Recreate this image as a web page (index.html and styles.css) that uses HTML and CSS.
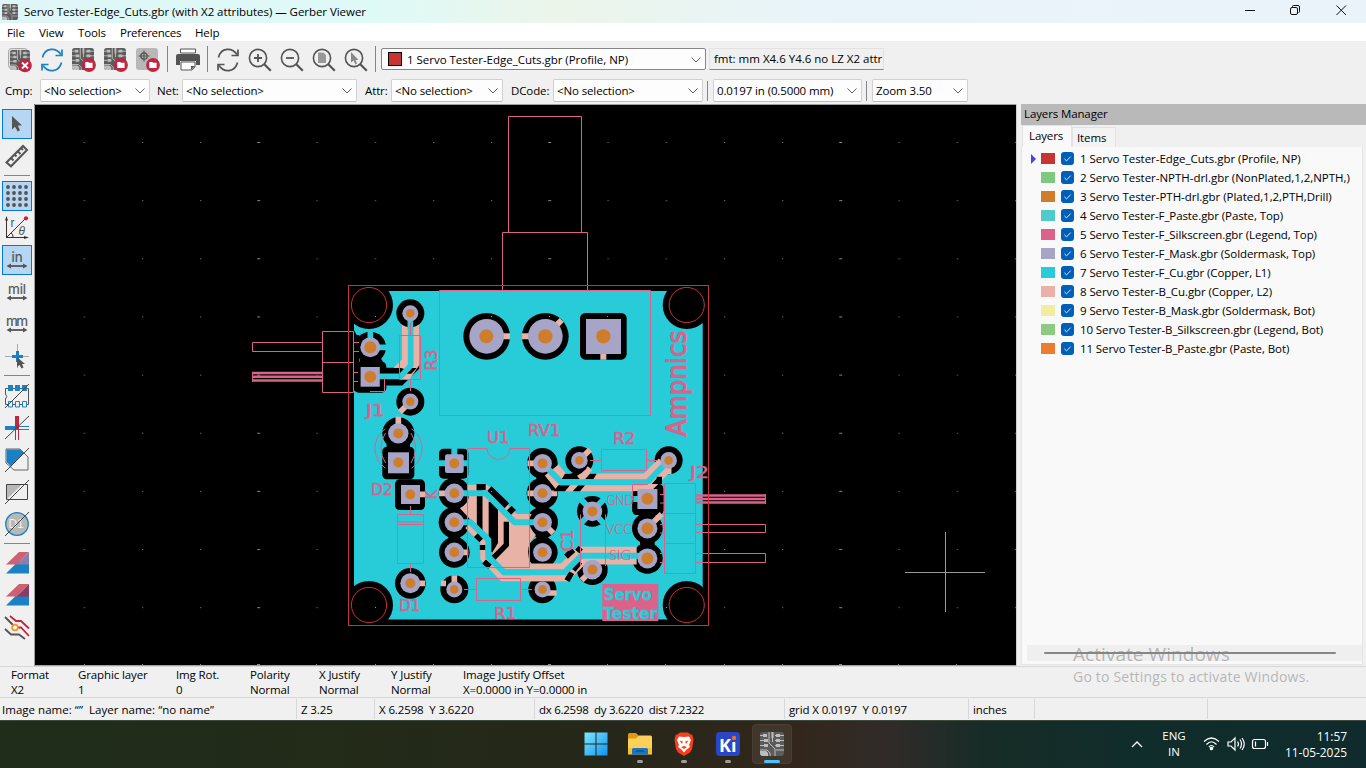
FILE: index.html
```html
<!DOCTYPE html>
<html lang="en">
<head>
<meta charset="utf-8">
<title>Gerber Viewer</title>
<link rel="stylesheet" href="styles.css">
</head>
<body>
<svg class="defs" width="0" height="0">
  <symbol id="pcb" viewBox="0 0 24 24">
    <rect width="24" height="24" rx="3" fill="#5c5c5c"/>
    <g fill="none" stroke="#bdbdbd" stroke-width="1"><path d="M0 3.5H6M0 8.5H7M0 13.5H7M15 3.5H24M15 8.5H24M15 13.5H24M9 0V11L15 17V24M12.5 0V10M0 18H7L10 21V24M16 18H24"/></g>
    <g fill="#bdbdbd"><path d="M3 2H7V5H3zM4 7H8V10H4zM4 12H8V15H4zM16 2H20V5H16zM16 7H20V10H16zM16 12H20V15H16zM0 19H6L8 21V24H3Q0 24 0 21zM11.5 0H13.5V6H11.5z"/></g>
  </symbol>
  <symbol id="badge" viewBox="0 0 14 14"><circle cx="7" cy="7" r="6.9" fill="#bf2641"/><path d="M3.3 4H6.2L7 4.800H10.600V10H3.300z" fill="#fff"/></symbol>
  <symbol id="tick" viewBox="0 0 13 13"><rect width="13" height="13" rx="3" fill="#005fb8"/><path d="M3.4 6.8L5.5 8.9L9.7 4.6" fill="none" stroke="#d9e8f6"/></symbol>
  <symbol id="arr" viewBox="0 0 24 24"><path d="M4 18H20" stroke="#545454" stroke-width="1.8"/><path d="M1.5 18L6 15.5V20.5zM22.5 18L18 15.5V20.5z" fill="#545454"/></symbol>
  <symbol id="lens" viewBox="0 0 24 24"><circle cx="10" cy="10" r="8.600" fill="none" stroke="#545454" stroke-width="1.6"/><path d="M16 16L22.8 22.8" stroke="#545454" stroke-width="2.2"/></symbol>
  <symbol id="sync" viewBox="0 0 24 24"><path d="M2.500 9.500C5 -.5 16 -1 21 6.500M21.500 14.500C19 24.500 8 25 3 17.500" fill="none" stroke="currentColor" stroke-width="1.7"/><path d="M22 1.500V7.500H15.500M2 22.500V16.500H8.500" fill="none" stroke="currentColor" stroke-width="1.7"/></symbol>
</svg>

<header class="title">
  <svg width="16" height="16"><use href="#pcb"/></svg>
  <span class="title-text">Servo Tester-Edge_Cuts.gbr (with X2 attributes) — Gerber Viewer</span>
  <svg class="win" width="126" height="23" viewBox="1240 0 126 23" fill="none" stroke="#111"><path d="M1245 10.500H1255M1336.500 5.500L1346 15M1346 5.500L1336.500 15"/><rect x="1290.500" y="7.500" width="7" height="7" rx="1.500"/><path d="M1292.500 7V6.500Q1292.500 5.500 1293.500 5.500H1298Q1299.500 5.500 1299.500 7V11.500Q1299.500 12.500 1298.500 12.500"/></svg>
</header>
<nav class="menu"><span>File</span><span>View</span><span>Tools</span><span>Preferences</span><span>Help</span></nav>

<div class="bar bar-a">
  <svg class="ic" viewBox="0 0 24 24"><rect x=".5" y=".5" width="19" height="20" rx="3" fill="#ddd" stroke="#aaa"/><svg x="2" y="2" width="20" height="20"><use href="#pcb"/></svg><circle cx="17" cy="17.500" r="6.800" fill="#bf2641"/><path d="M14 14.500L20 20.500M20 14.500L14 20.500" stroke="#fff" stroke-width="1.800"/></svg>
  <svg class="ic blue" viewBox="0 0 24 24"><use href="#sync"/></svg>
  <svg class="ic" viewBox="0 0 24 24"><svg width="22" height="22"><use href="#pcb"/></svg><svg x="10" y="10" width="14" height="14"><use href="#badge"/></svg></svg>
  <svg class="ic" viewBox="0 0 24 24"><svg width="22" height="22"><use href="#pcb"/></svg><svg x="10" y="10" width="14" height="14"><use href="#badge"/></svg></svg>
  <svg class="ic" viewBox="0 0 24 24"><rect width="22" height="22" rx="3" fill="#b8b8b8"/><circle cx="8" cy="8" r="3.200" fill="none" stroke="#545454" stroke-width="1.300"/><path d="M8 2.500V13.500M2.500 8H13.500" stroke="#545454" stroke-width="1.200"/><svg x="10" y="10" width="14" height="14"><use href="#badge"/></svg></svg>
  <i class="sep"></i>
  <svg class="ic" viewBox="0 0 24 24"><path d="M4.500 1H19.500V5H4.500z" fill="#fff" stroke="#545454"/><path d="M0 8Q0 6 2 6H22Q24 6 24 8V17H20V13H4V17H0z" fill="#545454"/><path d="M5 14H19V19L16 22H5z" fill="#fff" stroke="#545454"/><path d="M19 18L15 22V18z" fill="#545454"/></svg>
  <i class="sep"></i>
  <svg class="ic" viewBox="0 0 24 24"><use href="#sync"/></svg>
  <svg class="ic" viewBox="0 0 24 24"><use href="#lens"/><path d="M6 10H14M10 6V14" stroke="#545454" stroke-width="1.800"/></svg>
  <svg class="ic" viewBox="0 0 24 24"><use href="#lens"/><path d="M6 10H14" stroke="#545454" stroke-width="1.800"/></svg>
  <svg class="ic" viewBox="0 0 24 24"><use href="#lens"/><path d="M6 4.500H11.500L14 7V15H6z" fill="#999"/></svg>
  <svg class="ic" viewBox="0 0 24 24"><use href="#lens"/><path d="M7 4V14.500L9.500 12.500L11.500 16.500L13 15.500L11.500 12H14.500z" fill="#888"/></svg>
  <i class="sep"></i>
  <div class="combo big"><i class="red"></i><span>1 Servo Tester-Edge_Cuts.gbr (Profile, NP)</span><svg class="cv" width="10" height="6"><path d="M.5 .5L5 5L9.500 .5"/></svg></div>
  <div class="fmt"><span>fmt: mm X4.6 Y4.6 no LZ X2 attr</span></div>
</div>

<div class="bar bar-b">
  <label class="l1">Cmp:</label><div class="combo c1"><span>&lt;No selection&gt;</span><svg class="cv" width="10" height="6"><path d="M.5 .5L5 5L9.500 .5"/></svg></div>
  <label class="l2">Net:</label><div class="combo c2"><span>&lt;No selection&gt;</span><svg class="cv" width="10" height="6"><path d="M.5 .5L5 5L9.500 .5"/></svg></div>
  <label class="l3">Attr:</label><div class="combo c3"><span>&lt;No selection&gt;</span><svg class="cv" width="10" height="6"><path d="M.5 .5L5 5L9.500 .5"/></svg></div>
  <label class="l4">DCode:</label><div class="combo c4"><span>&lt;No selection&gt;</span><svg class="cv" width="10" height="6"><path d="M.5 .5L5 5L9.500 .5"/></svg></div>
  <i class="sep"></i><div class="combo c5"><span>0.0197 in (0.5000 mm)</span><svg class="cv" width="10" height="6"><path d="M.5 .5L5 5L9.500 .5"/></svg></div>
  <i class="sep"></i><div class="combo c6"><span>Zoom 3.50</span><svg class="cv" width="10" height="6"><path d="M.5 .5L5 5L9.500 .5"/></svg></div>
</div>

<main class="main">
  <aside class="tools">
    <b class="on"><svg class="ic" viewBox="0 0 24 24"><path d="M7 4V17.500L10 14.700L12.700 19.500L15 18.300L12.800 13.500H17z" fill="#545454"/></svg></b>
    <b><svg class="ic" viewBox="0 0 24 24"><path d="M1.500 18.500L18 2L22 6L6 22.300z M6 14L8.500 16.500M9.500 10.500L11.500 12.500M13 7.500L15.500 10M16.500 4.500L18 6" fill="none" stroke="#545454" stroke-width="2"/></svg></b>
    <hr>
    <b class="on"><svg class="ic" viewBox="0 0 24 24"><path d="M3 3H22M3 9H22M3 15H22M3 21H22" stroke="#545454" stroke-width="3.800" stroke-linecap="round" stroke-dasharray="0 6"/></svg></b>
    <b><svg class="ic" viewBox="0 0 24 24"><path d="M1.500 22V3M1 21.500H21M2 21L20 3M6 17Q8.500 18.500 8 21.500" stroke="#333" fill="none"/><path d="M0 4.500L1.500 0L3 4.500zM19 20L24 21.500L19 23z" fill="#333"/><circle cx="21" cy="2.300" r="2.100" fill="#bf2641"/><text x="5.500" y="10.500" class="gi">r</text><text x="13.500" y="19" class="gi it">θ</text></svg></b>
    <b class="on"><svg class="ic" viewBox="0 0 24 24"><use href="#arr"/><text x="12" y="14" class="un">in</text></svg></b>
    <b><svg class="ic" viewBox="0 0 24 24"><use href="#arr"/><text x="12" y="14" class="un">mil</text></svg></b>
    <b><svg class="ic" viewBox="0 0 24 24"><use href="#arr"/><text x="12" y="14" class="un" textLength="22">mm</text></svg></b>
    <b><svg class="ic" viewBox="0 0 24 24"><path d="M12.500 0V24M0 12.500H24" stroke="#aaa"/><path d="M12.500 7V18M7 12.500H18" stroke="#1a81c4" stroke-width="3"/><path d="M12 13V23L14.500 21L16.500 24.500L18.500 23.500L17 20H20z" fill="#545454"/></svg></b>
    <hr>
    <b><svg class="ic" viewBox="0 0 24 24"><path d="M.5 4.500H23.500V20.500H.5V15Q3 12.500 .5 10z" fill="none" stroke="#545454"/><path d="M3 1H8V7H3zM10 1H15V7H10zM17 1H22V7H17z" fill="#1a81c4"/><path d="M3.500 17.500H7.500V23H3.500zM10.500 17.500H14.500V23H10.500zM17.500 17.500H21.500V23H17.500z" fill="#f0f0f0" stroke="#1a81c4"/><path d="M0 24L24 0" stroke="#444"/></svg></b>
    <b><svg class="ic" viewBox="0 0 24 24"><path d="M0 12H12" stroke="#1a81c4" stroke-width="4"/><path d="M12 10.500H24M12 13.500H24" stroke="#1a81c4"/><path d="M12 0V13" stroke="#bf2641" stroke-width="4"/><path d="M10.500 13V24M13.500 13V24" stroke="#bf2641"/><path d="M0 23L24 0" stroke="#444"/></svg></b>
    <b><svg class="ic" viewBox="0 0 24 24"><path d="M1 1H15L23 9V22H9L1 15z" fill="#f0f0f0" stroke="#666"/><path d="M1.500 1.500H15L19 5L6 18.500L1.500 14z" fill="#1a81c4"/><path d="M0 24L24 0" stroke="#444"/></svg></b>
    <b><svg class="ic" viewBox="0 0 24 24"><path d="M1.500 19.500V4.500H17z" fill="#b8b8b8"/><path d="M1.500 4.500H22.500V19.500H1.500zM0 24L24 0" fill="none" stroke="#444"/></svg></b>
    <b><svg class="ic" viewBox="0 0 24 24"><circle cx="12" cy="12" r="11.300" fill="#b8b8b8" stroke="#1a81c4" stroke-width="1.300"/><text x="3.500" y="16" class="d1">D1</text><path d="M0 24L24 0" stroke="#444"/></svg></b>
    <hr>
    <b><svg class="ic" viewBox="0 0 24 24"><path d="M1 21.500L13 9.500H24V21.500z" fill="#1a81c4"/><path d="M1 12.500L14 0H24L12 12.500z" fill="#cf6074"/><path d="M24 0V12.500H12z" fill="#8881ae"/></svg></b>
    <b><svg class="ic" viewBox="0 0 24 24"><path d="M1 21.500L13 9.500H24V21.500z" fill="#1a81c4"/><path d="M1 12.500L14 0H24L12 12.500z" fill="#cf6074"/><path d="M24 0V12.500H12z" fill="#8a3c64"/></svg></b>
    <b><svg class="ic" viewBox="0 0 24 24" fill="none" stroke-width="1.800"><path d="M0 1L9 10M0 13L6 18.500H14L20 23" stroke="#545454"/><path d="M5 0L11 5H16L24 12.500M12 11.500H16L24 20" stroke="#bf2641"/><circle cx="10" cy="11.500" r="2.800" stroke="#f39a1e" fill="#fff"/></svg></b>
  </aside>

  <svg class="canvas" width="982" height="562" viewBox="34 104 982 562">
    <defs><pattern id="grid" x="-32.800" y="142" width="291" height="58.150" patternUnits="userSpaceOnUse"><path d="M0 .5H2M58.500 .5H59.500M116.700 .5H117.700M175 .5H176M233 .5H234M290 .5H291" stroke="#8a8a8a"/></pattern></defs>
    <rect x="34" y="104" width="982" height="562" fill="#000"/>
    <rect x="35" y="105" width="981" height="559" fill="url(#grid)"/>
    <path d="M84.500 664V666M142.500 664V666M200.500 664V666M316.500 664V666M375.500 664V666M433.500 664V666M491.500 664V666M607.500 664V666M665.500 664V666M724.500 664V666M782.500 664V666M898.500 664V666M956.500 664V666M257 664.500H260M548 664.500H551M839 664.500H842" stroke="#8a8a8a"/>
    <rect x="354" y="291" width="348.700" height="328.500" fill="#28ccd9"/>
    <g fill="#000"><circle cx="369" cy="305" r="24"/><circle cx="686.700" cy="305" r="24"/><circle cx="369" cy="605" r="24"/><circle cx="686.700" cy="605" r="24"/></g>

    <!-- J1, R3 -->
    <g transform="translate(240 270) scale(.33333)">
      <circle cx="391" cy="232" r="47"/><path d="M342 180L350 195H358V362H342z"/><rect x="342" y="275" width="97" height="93" rx="14"/><path d="M360 262H420L432 280H360z"/>
      <path d="M420 320H476L511 285V160" fill="none" stroke="#000" stroke-width="53"/>
      <path d="M484 155H538V285L510 327H478L500 300L484 294H460L484 270z" fill="#e8b2a7"/><path d="M500 294H530L514 311H494z"/>
      <path d="M400 319H482L512 287V130M391 180V232H440" fill="none" stroke="#28ccd9" stroke-width="17"/>
      <circle cx="511" cy="130" r="42"/><path d="M511 140V180" stroke="#28ccd9" stroke-width="17"/><circle cx="511" cy="395" r="42"/><circle cx="475" cy="490" r="48"/><path d="M511 395L480 426M475 490V440" stroke="#e8b2a7" stroke-width="17"/>
    </g>
    <!-- RV1 -->
    <g transform="translate(430 270) scale(.33333)">
      <circle cx="170" cy="199" r="70"/><circle cx="346" cy="199" r="70"/><rect x="450" y="129" width="140" height="140" rx="16"/>
      <path d="M170 199H240M346 199H276M346 199L395 150M520 199V269" stroke="#e8b2a7" stroke-width="18"/>
      <g fill="#a6a5c8"><circle cx="170" cy="199" r="52"/><circle cx="346" cy="199" r="52"/><rect x="468" y="147" width="105" height="105"/></g>
      <g fill="#ce7d2c"><circle cx="169" cy="199" r="21"/><circle cx="346" cy="199" r="21.500"/><circle cx="520" cy="199" r="21.500"/></g>
    </g>
    <!-- D2, D1, U1, R1 -->
    <g transform="translate(340 420) scale(.33333)">
      <rect x="127" y="80" width="96" height="98" rx="14"/><path d="M140 60H210V90H140z"/><rect x="165" y="178" width="90" height="92" rx="14"/><circle cx="211" cy="490" r="46"/>
      <rect x="297" y="86" width="88" height="90" rx="14"/>
      <g><circle cx="343" cy="220" r="47"/><circle cx="343" cy="307" r="47"/><circle cx="343" cy="397" r="46"/><circle cx="607" cy="130" r="46"/><circle cx="607" cy="220" r="47"/><circle cx="607" cy="307" r="47"/><circle cx="607" cy="397" r="46"/><circle cx="343" cy="508" r="42"/><circle cx="607" cy="508" r="42"/><path d="M325 150H361V400H325zM589 130H625V400H589z"/></g>
      <path d="M382 194H442L530 282H575Q555 310 588 345Q550 380 573 433H660V448H495L458 412V355L390 298L360 265Q385 250 386 232L382 210z" fill="#e8b2a7"/>
      <g fill="none" stroke="#000"><path d="M419 192V334" stroke-width="17"/><path d="M460 245V365L445 390" stroke-width="28"/><path d="M499 305V375L460 414" stroke-width="16"/><path d="M447 207L500 258M507 265L520 278" stroke-width="22"/><path d="M410 201H437" stroke-width="18"/></g>
      <path d="M382 318L430 366V415L487 475H660" fill="none" stroke="#e8b2a7" stroke-width="18"/>
      <path d="M408 345L424 361M428 375V390M432 425L450 440" stroke="#000" stroke-width="17"/>
      <path d="M343 220H437L524 307H600M343 307H392L445 360V410L492 457H662M343 80V130H385M343 130H297" fill="none" stroke="#28ccd9" stroke-width="18"/>
      <path d="M211 223H255M211 490H255M343 220H297M343 397H385M607 130H562M607 220H562M607 220H652M607 307L640 340M343 508V466M318 490H303M607 519H650" stroke="#e8b2a7" stroke-width="17"/>
    </g>
    <!-- R2, C1, J2 -->
    <g transform="translate(530 420) scale(.33333)">
      <circle cx="148" cy="121" r="42"/><circle cx="416" cy="121" r="42"/><rect x="307" y="192" width="93" height="93" rx="14"/><circle cx="352" cy="325" r="46"/><circle cx="352" cy="415" r="46"/><path d="M330 270H374V420H330z"/><circle cx="187" cy="274" r="46"/><circle cx="187" cy="449" r="46"/>
      <path d="M65 150L95 187H352L405 134" fill="none" stroke="#e8b2a7" stroke-width="53"/><path d="M180 145L120 210" stroke="#e8b2a7" stroke-width="18"/>
      <path d="M105 161H135L150 178H95zM180 161H200L190 178H165zM85 196H120L105 214H70zM145 196H165L150 214H128zM365 192L385 170V192z"/><path d="M125 170L165 140M388 192V170" stroke="#000" stroke-width="16"/>
      <path d="M38 130L94 187H352L416 121" fill="none" stroke="#28ccd9" stroke-width="18"/><rect x="307" y="213" width="93" height="72" rx="14"/>
      <path d="M0 457H104L154 407H320" fill="none" stroke="#e8b2a7" stroke-width="53"/><path d="M108 410L130 390M142 395L152 383M111 482L125 458M130 450L150 425" stroke="#000" stroke-width="17"/>
      <path d="M0 457H104L154 407H330M310 237H352M148 233L226 315M226 233L148 315" fill="none" stroke="#28ccd9" stroke-width="18"/>
      <path d="M148 121L180 89M416 121V162M352 237V192M352 325L395 282M187 449L155 481" stroke="#e8b2a7" stroke-width="17"/>
    </g>

    <!-- pads -->
    <g fill="#a6a5c8"><circle cx="370.300" cy="347.300" r="10"/><rect x="360.600" y="367" width="19.200" height="19.700"/><circle cx="410.300" cy="313.300" r="8"/><circle cx="410.300" cy="401.600" r="8"/><circle cx="398.300" cy="433.400" r="10.200"/><rect x="388" y="452.300" width="21" height="21"/><rect x="401" y="485" width="19" height="19"/><circle cx="410.300" cy="583.300" r="10"/>
    <rect x="445" y="454.300" width="18.700" height="18.700" rx="2"/><circle cx="454.300" cy="493.300" r="9.700"/><circle cx="454.300" cy="522.300" r="9.700"/><circle cx="454.300" cy="552.300" r="9.700"/><circle cx="542.500" cy="463.400" r="9.400"/><circle cx="542.500" cy="493.300" r="9.400"/><circle cx="542.500" cy="522.300" r="9.400"/><circle cx="542.500" cy="552.300" r="9.400"/><circle cx="454.300" cy="589.400" r="8"/><circle cx="542.500" cy="589.400" r="8"/>
    <circle cx="579.400" cy="460.400" r="8.300"/><circle cx="668.600" cy="460.400" r="8.300"/><circle cx="592.400" cy="511.400" r="9.800"/><circle cx="592.400" cy="569.600" r="9.800"/><rect x="637.400" y="489" width="20" height="20"/><circle cx="647.400" cy="528.400" r="10"/><circle cx="647.400" cy="558.400" r="10"/></g>
    <g fill="#ce7d2c"><circle cx="370.300" cy="347.300" r="6"/><circle cx="370.300" cy="376.700" r="6"/><circle cx="410.300" cy="313.300" r="4.300"/><circle cx="410.300" cy="401.600" r="4.300"/><circle cx="398.300" cy="433.400" r="5"/><circle cx="398.300" cy="462.500" r="5"/><circle cx="410.300" cy="494.500" r="5"/><circle cx="410.300" cy="583.300" r="5"/>
    <circle cx="454.300" cy="463.400" r="5"/><circle cx="454.300" cy="493.300" r="5"/><circle cx="454.300" cy="522.300" r="5"/><circle cx="454.300" cy="552.300" r="5"/><circle cx="542.500" cy="463.400" r="5"/><circle cx="542.500" cy="493.300" r="5"/><circle cx="542.500" cy="522.300" r="5"/><circle cx="542.500" cy="552.300" r="5"/><circle cx="454.300" cy="589.400" r="4.300"/><circle cx="542.500" cy="589.400" r="4.300"/>
    <circle cx="579.400" cy="460.400" r="4.300"/><circle cx="668.600" cy="460.400" r="4.300"/><circle cx="592.400" cy="511.400" r="5"/><circle cx="592.400" cy="569.600" r="5"/><circle cx="647.400" cy="498.700" r="6"/><circle cx="647.400" cy="528.400" r="6"/><circle cx="647.400" cy="558.400" r="6"/></g>

    <!-- silkscreen -->
    <g class="silk">
      <path d="M508.500 232.500V116.500H581.500V232.500M502.500 290V232.500H587.500V290M439.500 290.500H650.500V415.500H439.500z"/>
      <path d="M322.500 331.500H353.500V392.500H322.500zM322.500 362.500H353.500M322.500 342.500H252.500V351.500H322.500M354 342.500H359M354 351.500H359M354 372.500H358M354 381.500H358M384.500 377V391.500H370"/>
      <path d="M252 373H322.500M252 376.800H322.500M252 380.500H322.500" stroke-width="2.500"/><path d="M252.500 372V382"/>
      <path d="M399.500 335.500H420.500V379.500H399.500zM410.500 323V335M410.500 380V391"/>
      <path d="M385.500 428.900A23.500 23.500 0 0 0 385.500 468.100M411.500 428.900A23.500 23.500 0 0 1 411.500 468.100M385.500 433A27 27 0 0 0 385.500 463M411 433A27 27 0 0 1 411 463"/>
      <path d="M397.500 514.500H423.500V563.500H397.500zM397 522H423M397 524.500H423M410.500 506V514M410.500 564V572"/>
      <path d="M467.500 448.500H487A11.500 11 0 0 0 510 448.500H529.500V567.500H467.500zM476.500 578.500H520.500V600.500H476.500zM464 589.500H476M521 589.500H532"/>
      <path d="M601.500 449.500H646.500V470.500H601.500zM590 460.500H601M647 460.500H658M580.500 514.500V566M605.500 514.500V566M632.500 500V484.500H648"/>
      <path d="M664.500 483.500H695.500V573.500H664.500zM664.500 513.500H695.500M664.500 543.500H695.500M696 524.500H765.500V532.500H696M696 553.500H765.500V562.500H696M660 494.500H664M660 503H664M660 524.500H664M660 533H664M660 553.500H664M660 562.500H664"/>
      <path d="M696 495.500H766M696 499H766M696 502.500H766" stroke-width="2.500"/><path d="M765.500 494V504"/>
    </g>
    <rect x="602.300" y="584" width="56" height="37" fill="#db628b"/>
    <g class="ref">
      <text x="366" y="415.500" textLength="19" lengthAdjust="spacingAndGlyphs">J1</text><text x="371" y="495" textLength="22" lengthAdjust="spacingAndGlyphs">D2</text><text x="399" y="611" textLength="21.500" lengthAdjust="spacingAndGlyphs">D1</text><text x="487" y="442.500" textLength="22.500" lengthAdjust="spacingAndGlyphs">U1</text><text x="528" y="436" textLength="32.500" lengthAdjust="spacingAndGlyphs">RV1</text><text x="613" y="444" textLength="22.500" lengthAdjust="spacingAndGlyphs">R2</text><text x="690" y="478" textLength="19" lengthAdjust="spacingAndGlyphs">J2</text><text x="494" y="619" textLength="22.500" lengthAdjust="spacingAndGlyphs">R1</text>
      <text transform="translate(436.500 370.500) rotate(-90)" textLength="21" lengthAdjust="spacingAndGlyphs">R3</text><text transform="translate(573 551.500) rotate(-90)" textLength="22" lengthAdjust="spacingAndGlyphs">C1</text><text transform="translate(437 499.500) rotate(-90)" textLength="9.500" lengthAdjust="spacingAndGlyphs">K</text>
      <text class="thin" x="606.500" y="505" textLength="27" lengthAdjust="spacingAndGlyphs">GND</text><text class="thin" x="605.500" y="534" textLength="27" lengthAdjust="spacingAndGlyphs">VCC</text><text class="thin" x="609" y="560" textLength="22" lengthAdjust="spacingAndGlyphs">SIG</text>
      <text class="amp" transform="translate(686 436.500) rotate(-90)" textLength="106" lengthAdjust="spacingAndGlyphs">Ampnics</text>
      <text class="srv" x="604" y="600" textLength="48" lengthAdjust="spacingAndGlyphs">Servo</text><text class="srv" x="603.500" y="619.200" textLength="54" lengthAdjust="spacingAndGlyphs">Tester</text>
    </g>
    <g fill="none" stroke="#c83434"><rect x="348.500" y="285.500" width="360" height="340"/><circle cx="369" cy="305" r="17.600"/><circle cx="686.700" cy="305" r="17.600"/><circle cx="369" cy="605" r="17.600"/><circle cx="686.700" cy="605" r="17.600"/></g>
    <path d="M375 316.500H376M491 316.500H492M549 316.500H550M607 316.500H608M375 607.500H376M666 607.500H667M491 491.500H492" stroke="#999"/>
    <path d="M905 572.500H985M945.500 532V612" stroke="#9a9a9a"/>
    <path d="M34.500 666V104.500H1016M34 665.500H1016" fill="none" stroke="#a0a0a0"/>
  </svg>

  <section class="panel">
    <div class="panel-head"><span>Layers Manager</span></div>
    <div class="tabs"><span class="tab cur">Layers</span><span class="tab">Items</span></div>
    <div class="list">
      <div class="row"><u class="tri"></u><i class="k1"></i><svg><use href="#tick"/></svg><span>1 Servo Tester-Edge_Cuts.gbr (Profile, NP)</span></div>
      <div class="row"><u></u><i class="k2"></i><svg><use href="#tick"/></svg><span>2 Servo Tester-NPTH-drl.gbr (NonPlated,1,2,NPTH,)</span></div>
      <div class="row"><u></u><i class="k3"></i><svg><use href="#tick"/></svg><span>3 Servo Tester-PTH-drl.gbr (Plated,1,2,PTH,Drill)</span></div>
      <div class="row"><u></u><i class="k4"></i><svg><use href="#tick"/></svg><span>4 Servo Tester-F_Paste.gbr (Paste, Top)</span></div>
      <div class="row"><u></u><i class="k5"></i><svg><use href="#tick"/></svg><span>5 Servo Tester-F_Silkscreen.gbr (Legend, Top)</span></div>
      <div class="row"><u></u><i class="k6"></i><svg><use href="#tick"/></svg><span>6 Servo Tester-F_Mask.gbr (Soldermask, Top)</span></div>
      <div class="row"><u></u><i class="k7"></i><svg><use href="#tick"/></svg><span>7 Servo Tester-F_Cu.gbr (Copper, L1)</span></div>
      <div class="row"><u></u><i class="k8"></i><svg><use href="#tick"/></svg><span>8 Servo Tester-B_Cu.gbr (Copper, L2)</span></div>
      <div class="row"><u></u><i class="k9"></i><svg><use href="#tick"/></svg><span>9 Servo Tester-B_Mask.gbr (Soldermask, Bot)</span></div>
      <div class="row"><u></u><i class="k10"></i><svg><use href="#tick"/></svg><span>10 Servo Tester-B_Silkscreen.gbr (Legend, Bot)</span></div>
      <div class="row"><u></u><i class="k11"></i><svg><use href="#tick"/></svg><span>11 Servo Tester-B_Paste.gbr (Paste, Bot)</span></div>
      <div class="scroll"><i></i></div>
    </div>
  </section>
</main>

<section class="msg">
  <p>Format<br>X2</p><p>Graphic layer<br>1</p><p>Img Rot.<br>0</p><p>Polarity<br>Normal</p><p>X Justify<br>Normal</p><p>Y Justify<br>Normal</p><p>Image Justify Offset<br>X=0.0000 in Y=0.0000 in</p>
</section>
<section class="status"><span>Image name: “”&nbsp; Layer name: “no name”</span><span>Z 3.25</span><span>X 6.2598&nbsp; Y 3.6220</span><span>dx 6.2598&nbsp; dy 3.6220&nbsp; dist 7.2322</span><span>grid X 0.0197&nbsp; Y 0.0197</span><span>inches</span><span></span><span></span></section>

<footer class="task">
  <div class="apps">
    <div class="app"><svg width="24" height="24" viewBox="0 0 24 24"><defs><linearGradient id="w" x2="1" y2="1"><stop stop-color="#7be9fd"/><stop offset="1" stop-color="#1292f0"/></linearGradient></defs><path d="M.5 .5H11.500V11.500H.5zM12.500 .5H23.500V11.500H12.500zM.5 12.500H11.500V23.500H.5zM12.500 12.500H23.500V23.500H12.500z" fill="url(#w)"/></svg><i class="none"></i></div>
    <div class="app"><svg width="24" height="24" viewBox="0 0 24 24"><path d="M0 2.500Q0 1 1.500 1H8L11 4V8H0z" fill="#dd9b10"/><path d="M0 6.500H8L11 3.500H22.500Q24 3.500 24 5V22.500H0z" fill="#fdd05a"/><path d="M0 16H24V22H0z" fill="#f9c02f"/><path d="M4 22.500V17.500Q4 16 5.500 16H18.500Q20 16 20 17.500V22.500z" fill="#1577c5"/><path d="M8 19H16" stroke="#0c4f90" stroke-width="1.500"/></svg><i></i></div>
    <div class="app"><svg width="24" height="24" viewBox="0 0 24 24"><path d="M6 2L8 .5H16L18 2L20.500 3L21.500 8L20 17L18 20.500L12 24L6 20.500L4 17L2.500 8L3.500 3z" fill="#f6401c"/><path d="M7 4.500L12 5L17 4.500L19 8L17 13L18 15L14.500 17.500L12 20.500L9.500 17.500L6 15L7 13L5 8z" fill="#fff"/><path d="M7.500 8.500L10.800 9.500L10 12zM16.500 8.500L13.200 9.500L14 12zM9 15L12 14L15 15L12 17z" fill="#f6401c"/></svg><i></i></div>
    <div class="app"><svg width="24" height="24" viewBox="0 0 24 24"><rect width="24" height="24" rx="4" fill="#2a46c8"/><text x="3" y="19.500" class="ki" textLength="17.500">Kı</text><circle cx="18" cy="6" r="2.200" fill="#f56a1c"/></svg><i></i></div>
    <div class="app act"><svg width="24" height="24"><use href="#pcb"/></svg><i class="cur"></i></div>
  </div>
  <div class="tray">
    <svg class="chev" width="12" height="8"><path d="M1 7L6 2L11 7" fill="none" stroke="#fff" stroke-width="1.400"/></svg>
    <p class="lang">ENG<br>IN</p>
    <svg width="66" height="18" viewBox="0 0 66 18" fill="none" stroke="#fff" stroke-width="1.200"><path d="M1 6.500Q8.500 -.5 16 6.500M3.500 9.500Q8.500 4 13.500 9.500M6 12Q8.500 9 11 12"/><circle cx="8.500" cy="13.500" r="1.200" fill="#fff"/><path d="M25 7H28L32 3V15L28 11H25zM34.500 6.500Q36.500 9 34.500 11.500M37 4.500Q40 9 37 13.500M39 3Q43.500 9 39 15"/><rect x="49.500" y="4.500" width="13" height="9" rx="2"/><path d="M52.500 6.500V11.500M64.500 7V11"/></svg>
    <p class="clock">11:57<br>11-05-2025</p>
  </div>
</footer>
<div class="watermark"><div class="wm1">Activate Windows</div><div class="wm2">Go to Settings to activate Windows.</div></div>
</body>
</html>
```
FILE: styles.css
```css
* { box-sizing: border-box; }
body { margin: 0; width: 1366px; height: 768px; overflow: hidden; background: #f0f0f0; color: #000; font: 11.5px/15px "Open Sans", "Noto Sans", sans-serif; letter-spacing: -0.12px; white-space: nowrap; display: flex; flex-direction: column; }
p { margin: 0; }
i, u { font-style: normal; text-decoration: none; flex: none; }
svg { flex: none; display: block; }
.defs { position: absolute; }
.title { height: 23px; display: flex; align-items: center; padding-left: 2px; background: linear-gradient(90deg, #def6f8 0, #defaf7 370px, #ecf5ea 560px, #e8f4f9 800px, #ebf3fa 100%); }
.title-text { margin-left: 6px; letter-spacing: -.05px; }
.win { margin-left: auto; }
.menu { height: 18px; background: #fff; display: flex; align-items: center; padding-left: 7px; }
.menu span:nth-child(1) { width: 32px; }
.menu span:nth-child(2) { width: 39px; }
.menu span:nth-child(3) { width: 42px; }
.menu span:nth-child(4) { width: 75px; letter-spacing: -.25px; }
.bar { display: flex; align-items: center; }
.bar-a { height: 36px; padding-left: 4px; }
.ic { width: 24px; height: 24px; margin: 0 4px; color: #545454; overflow: visible; }
.bar-a .ic { position: relative; top: 1px; }
.blue { color: #1a81c4; }
.bar-a .blue { color: #1a81c4; }
.sep { width: 1px; height: 26px; background: #858585; margin: 0 4px 0 3px; }
.bar-b .sep { height: 20px; margin: 0 5px 0 4px; }
.combo { height: 23px; background: #fdfdfd; border: 1px solid #d0d0d0; border-bottom-color: #bcbcbc; border-radius: 2px; display: flex; align-items: center; padding: 0 4px 1px 3px; }
.cv { margin-left: auto; fill: none; stroke: #606060; position: relative; top: 1px; }
.big { height: 22px; width: 325px; margin-left: 1px; border-color: #868686; padding-left: 6px; padding-bottom: 0; letter-spacing: -.02px; }
.red { width: 14px; height: 14px; margin-right: 5px; background: #c83434; border: 1px solid #000; }
.fmt { margin-left: 3px; width: 175px; height: 22px; border: 1px solid #e2e2e2; border-bottom: 1px solid #858585; padding: 2px 4px; letter-spacing: 0; }
.bar-b { height: 27px; }
.bar-b label { padding-bottom: 1px; }
.l1 { width: 40px; padding-left: 5px; } .l2 { width: 32px; padding-left: 7px; } .l3 { width: 34px; padding-left: 8px; } .l4 { width: 50px; padding-left: 8px; }
.c1 { width: 110px; } .c2 { width: 175px; } .c3 { width: 112px; } .c4 { width: 150px; } .c5 { width: 149px; } .c6 { width: 96px; }
.main { height: 562px; display: flex; }
.tools { width: 34px; padding: 4px 0 0 1px; }
.tools b { display: flex; width: 32px; height: 32px; align-items: center; justify-content: center; border: 1px solid #f0f0f0; }
.tools b.on { background: #b5d7f3; background-clip: padding-box; outline: 1px solid #0078d7; outline-offset: -2px; }
.tools hr { border: 0; height: 1px; width: 26px; margin: 3px 0 4px 3px; background: #858585; }
.gi { font: 12px "Liberation Sans", sans-serif; fill: #545454; }
.it { font-style: italic; }
.un { font: 13.5px Inter, Roboto, sans-serif; text-anchor: middle; fill: #545454; stroke: #545454; stroke-width: .2; }
.d1 { font: 12px "Liberation Sans", sans-serif; fill: #eee; }
.silk { fill: none; stroke: #db628b; }
.ref { fill: #db628b; stroke: #db628b; stroke-width: .5; font: 15.5px "DejaVu Sans", sans-serif; letter-spacing: 0; }
.ref .thin { font: 300 14px Lato, sans-serif; stroke-width: .2; }
.ref .amp { font: 26px "DejaVu Sans", sans-serif; stroke-width: 1.1; }
.ref .srv { font: bold 15.5px "DejaVu Sans", sans-serif; fill: #28ccd9; stroke: #28ccd9; stroke-width: .3; }
.panel { width: 350px; padding-left: 4px; border-left: 1px solid #d0d0d0; }
.panel-head { height: 21px; background: #b9b9b9; padding: 2px 3px; }
.tabs { height: 22px; display: flex; padding-left: 1px; align-items: flex-end; }
.tab { height: 20px; width: 44px; border: 1px solid #e2e2e2; border-bottom: 0; background: #f3f3f3; padding: 2px 4px; }
.tab.cur { height: 22px; width: 50px; background: #f9f9f9; padding: 2px 6px; }
.list { height: 518px; width: 342px; background: #f9f9f9; border: 1px solid #e5e5e5; border-top: 0; padding-top: 2px; display: flex; flex-direction: column; }
.row { height: 19px; display: flex; align-items: center; padding-left: 9px; letter-spacing: -.09px; }
.row:nth-child(1), .row:nth-child(2), .row:nth-child(3) { letter-spacing: -.03px; }
.row u { width: 10px; }
.row .tri { width: 5px; margin-right: 5px; border-left: 5px solid #4343f5; border-top: 5px solid transparent; border-bottom: 5px solid transparent; }
.row i { width: 14px; height: 11px; margin-right: 6px; }
.row svg { width: 13px; height: 13px; margin-right: 6px; }
.k1 { background: #c83434; } .k2 { background: #7fc87f; } .k3 { background: #ce7d2c; } .k4 { background: #4fcbcb; } .k5 { background: #db628b; } .k6 { background: #a7a5c6; } .k7 { background: #28ccd9; } .k8 { background: #e8b2a7; } .k9 { background: #f2eda1; } .k10 { background: #8dcb81; } .k11 { background: #ed7c33; }
.scroll { height: 16px; width: 335px; margin: auto 0 3px 5px; background: #efefef; padding: 7px 26px 0 17px; }
.scroll i { display: block; height: 2px; background: #868686; border-radius: 1px; }
.msg { height: 32px; border-top: 1px solid #d7d7d7; border-bottom: 1px solid #d7d7d7; display: flex; padding-left: 11px; }
.msg p:nth-child(1) { width: 67px; } .msg p:nth-child(2) { width: 98px; } .msg p:nth-child(3) { width: 74px; } .msg p:nth-child(4) { width: 69px; } .msg p:nth-child(5), .msg p:nth-child(6) { width: 72px; }
.status { height: 22px; display: flex; padding: 1px 0; }
.status span { border-right: 1px solid #d7d7d7; padding: 3px 0 0 4px; }
.status span:nth-child(1) { width: 297px; padding-left: 2px; letter-spacing: .03px; } .status span:nth-child(2) { width: 78px; } .status span:nth-child(3) { width: 160px; } .status span:nth-child(4) { width: 250px; letter-spacing: -.27px; } .status span:nth-child(5) { width: 184px; } .status span:nth-child(6) { width: 66px; } .status span:nth-child(7) { width: 173px; } .status span:nth-child(8) { width: 158px; border: 0; }
.task { height: 48px; position: relative; border-top: 1px solid #3f4a3e; background: linear-gradient(90deg, #202d1b 0, #232a18 380px, #26271a 620px, #33261b 790px, #302b29 890px, #182c27 980px, #0f2d2b 1150px, #102b2d 100%); color: #fff; display: flex; justify-content: space-between; padding-left: 576px; letter-spacing: 0; }
.apps { display: flex; gap: 4px; padding-top: 3px; }
.app { width: 40px; height: 40px; display: flex; flex-direction: column; align-items: center; padding-top: 8px; border-radius: 4px; }
.app i { width: 6px; height: 3px; border-radius: 2px; background: #a0a098; margin-top: 4px; }
.app .none { visibility: hidden; }
.app .cur { width: 16px; background: #4cc2ff; }
.act { background: #41362b; border: 1px solid #4a4036; padding-top: 7px; }
.ki { font: bold 18px "Open Sans", sans-serif; fill: #fff; }
.tray { display: flex; align-items: center; padding: 0 19px 1px 0; line-height: 16px; }
.lang { width: 42px; margin: 0 8px 0 10px; text-align: center; }
.clock { width: 78px; text-align: right; font-size: 11.9px; }
.watermark { position: absolute; left: 1073px; top: 642px; color: rgba(130, 130, 130, .55); }
.wm1 { font-size: 19px; line-height: 24px; letter-spacing: .05px; }
.wm2 { font-size: 14px; line-height: 22px; letter-spacing: .2px; }
```
